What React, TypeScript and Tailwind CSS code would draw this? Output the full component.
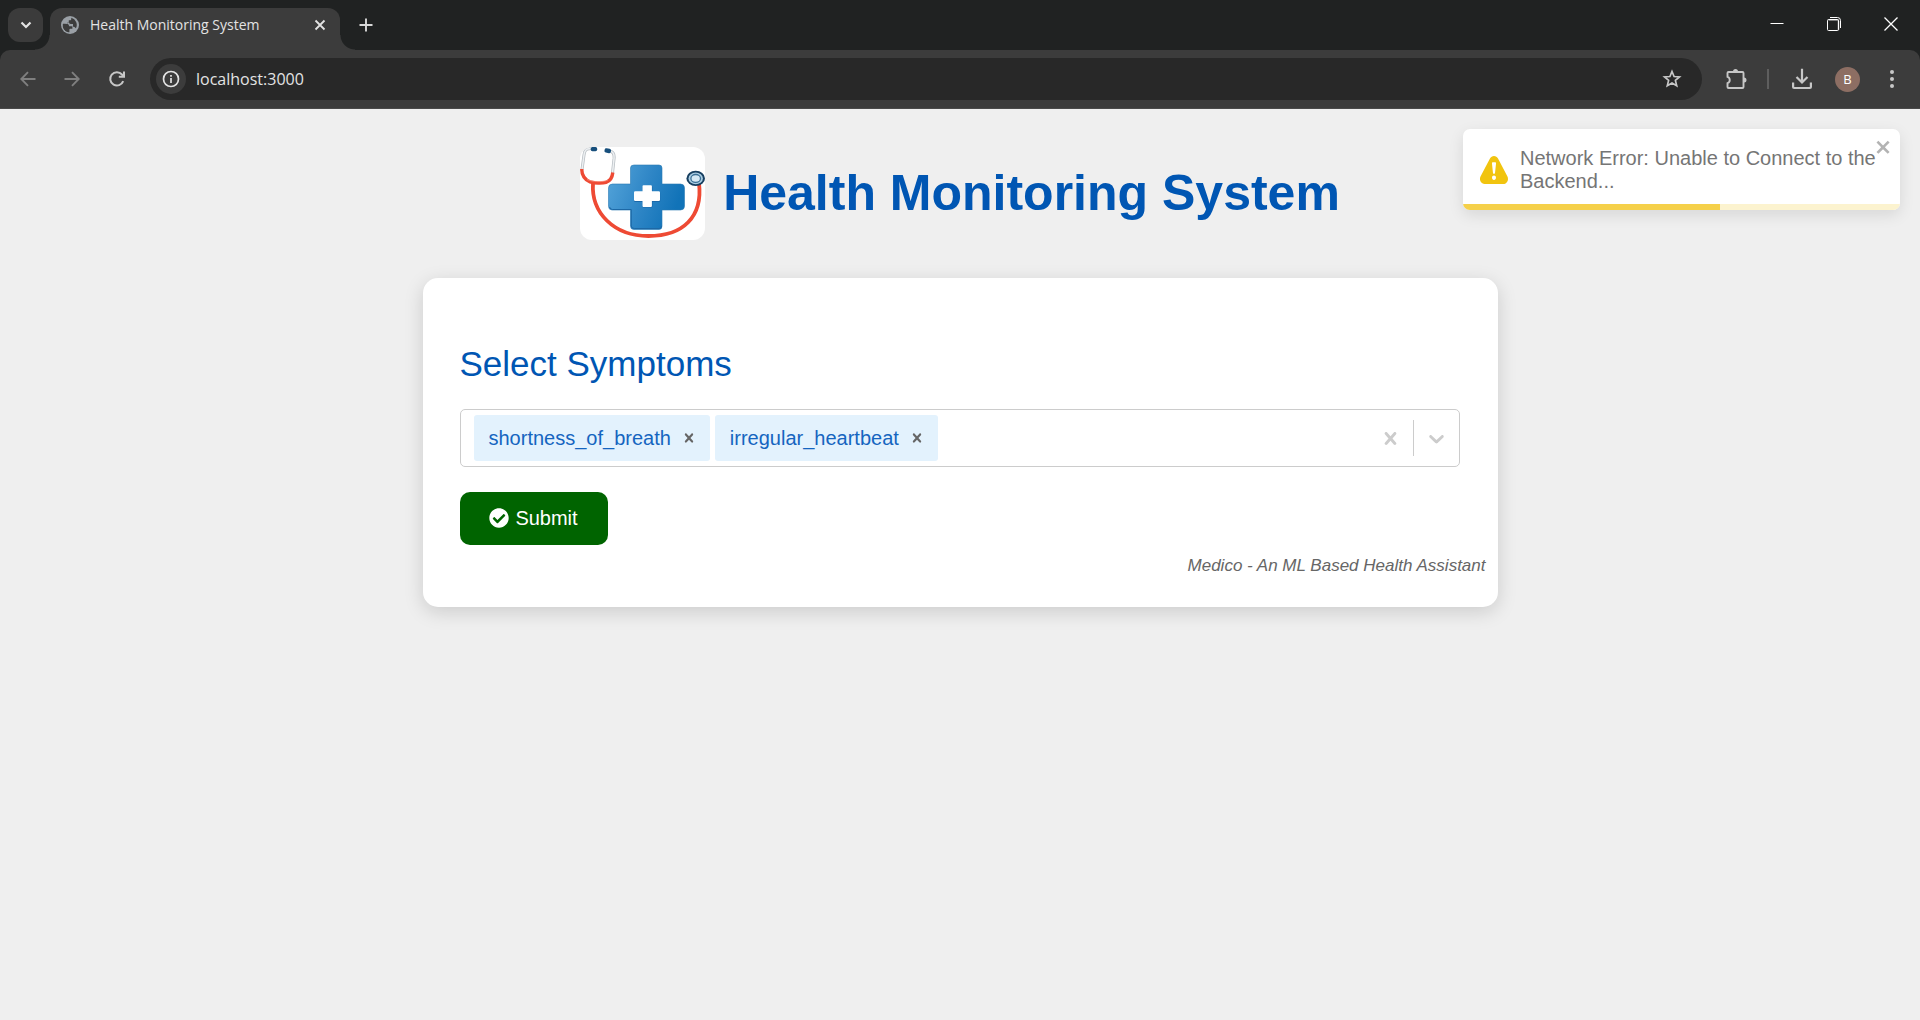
import { useState } from "react";
import { FaCheckCircle } from "react-icons/fa";

const CROSS =
  "M14.348 14.849c-0.469 0.469-1.229 0.469-1.697 0l-2.651-3.030-2.651 3.029c-0.469 0.469-1.229 0.469-1.697 0-0.469-0.469-0.469-1.229 0-1.697l2.758-3.15-2.759-3.152c-0.469-0.469-0.469-1.228 0-1.697s1.228-0.469 1.697 0l2.652 3.031 2.651-3.031c0.469-0.469 1.228-0.469 1.697 0s0.469 1.229 0 1.697l-2.758 3.152 2.758 3.15c0.469 0.469 0.469 1.229 0 1.698z";
const CHEVRON =
  "M4.516 7.548c0.436-0.446 1.043-0.481 1.576 0l3.908 3.747 3.908-3.747c0.533-0.481 1.141-0.446 1.574 0 0.436 0.445 0.408 1.197 0 1.615-0.406 0.418-4.695 4.502-4.695 4.502-0.217 0.223-0.502 0.335-0.787 0.335s-0.57-0.112-0.789-0.335c0 0-4.287-4.084-4.695-4.502s-0.436-1.17 0-1.615z";
const WARNING =
  "M23.32 17.191L15.438 2.184C14.728.833 13.416 0 11.996 0c-1.42 0-2.733.833-3.443 2.184L.533 17.448a4.744 4.744 0 000 4.368C1.243 23.167 2.555 24 3.975 24h16.05C22.22 24 24 22.044 24 19.632c0-.904-.251-1.746-.68-2.44zm-9.622 1.46c0 1.033-.724 1.823-1.698 1.823s-1.698-.79-1.698-1.822v-.043c0-1.028.724-1.822 1.698-1.822s1.698.79 1.698 1.822v.043zm.039-12.285l-.84 8.06c-.057.581-.408.943-.897.943-.49 0-.84-.367-.896-.942l-.84-8.065c-.057-.624.25-1.095.779-1.095h1.91c.528.005.84.476.784 1.1z";
const TOAST_CLOSE =
  "M7.71 8.23l3.75 3.75-1.48 1.48-3.75-3.75-3.75 3.75L1 11.98l3.75-3.75L1 4.48 2.48 3l3.75 3.75L9.98 3l1.48 1.48-3.75 3.75z";

function TabStrip() {
  return (
    <div className="flex h-[50px] items-start bg-[#202222] pl-2">
      <button aria-label="Search tabs" className="mt-2 flex h-[34px] w-[35px] items-center justify-center rounded-xl bg-[#3b3b3b] text-[#e3e3e3]">
        <svg width="12" height="8" viewBox="0 0 12 8" fill="none" stroke="currentColor" strokeWidth="2.200"><path d="M1.5 1.5 6 6l4.500-4.500" /></svg>
      </button>
      <div className="relative ml-[7px] mt-2 flex h-[42px] w-[290px] items-center rounded-t-xl bg-[#3c3c3c] pb-2 pl-[11px] pr-3 text-[#e3e3e3] before:absolute before:bottom-0 before:-left-[15px] before:size-[15px] before:bg-[radial-gradient(circle_at_0_0,transparent_14px,#3c3c3c_15px)] after:absolute after:bottom-0 after:-right-[15px] after:size-[15px] after:bg-[radial-gradient(circle_at_100%_0,transparent_14px,#3c3c3c_15px)]">
        <svg width="18" height="18" viewBox="0 0 18 18" className="shrink-0">
          <circle cx="9" cy="9" r="9" fill="#9aa0a6" />
          <path d="M10.300 1.800 10.200 3.500q0 .8-.8.800H7.800v1.300q0 .8-.9.900H6.200v1.700h4.500q1 0 1 1v1.500h1q1 0 1.300.9l.9.700A7.300 7.300 0 0 0 10.300 1.800Z" fill="#3c3c3c" />
          <path d="M1.800 8.100 5.900 12.200v.8q0 1.400 1.500 1.500v1.600A7.300 7.300 0 0 1 1.800 8.100Z" fill="#3c3c3c" />
          <path d="M6.300 6.400H8q.2 1.700 2 1.700h2v2.200h-1.700q-1.300 0-1.500-1.200Q8.500 8.200 7.500 8.200H6.300Z" fill="#9aa0a6" />
          <path d="M2 7.800q3.200-.2 4.700.3 1.300.7 1.500 2.200h2.300q.9 0 .9.900v1.500H9.300q-.9 0-.9.900v2.600l-1 .1A7.200 7.200 0 0 1 2 7.800Z" fill="#3c3c3c" />
        </svg>
        <span className="ml-[11px] flex-1 whitespace-nowrap text-[14px] leading-5">Health Monitoring System</span>
        <button aria-label="Close tab" className="flex size-4 items-center justify-center">
          <svg width="12" height="12" viewBox="0 0 12 12" stroke="currentColor" strokeWidth="1.800"><path d="m1.500 1.500 9 9m0-9-9 9" /></svg>
        </button>
      </div>
      <button aria-label="New tab" className="ml-[19px] mt-[18px] flex size-[14px] items-center justify-center text-[#d8d8d8]">
        <svg width="14" height="14" viewBox="0 0 14 14" stroke="currentColor" strokeWidth="1.900"><path d="M7 .5v13M.5 7h13" /></svg>
      </button>
      <div className="ml-auto flex h-12 items-center pr-px text-white">
        <button aria-label="Minimize" className="flex h-12 w-[57px] items-center justify-center">
          <svg width="14" height="14" viewBox="0 0 14 14" fill="currentColor"><rect x=".5" y="6" width="13" height="1" /></svg>
        </button>
        <button aria-label="Restore" className="flex h-12 w-[57px] items-center justify-center">
          <svg width="14" height="14" viewBox="0 0 14 14" fill="none" stroke="currentColor">
            <path d="M1.500 3h9q1 0 1 1v9" stroke="#9a9a9a" strokeWidth="1.600" />
            <rect x=".5" y="2.500" width="11" height="11" rx="1" />
            <path d="M3 .5h7.500a3 3 0 0 1 3 3V11" />
          </svg>
        </button>
        <button aria-label="Close window" className="flex h-12 w-[57px] items-center justify-center">
          <svg width="14" height="14" viewBox="0 0 14 14" stroke="currentColor" strokeWidth="1.300"><path d="m.5.500 13 13m0-13-13 13" /></svg>
        </button>
      </div>
    </div>
  );
}

function Toolbar() {
  return (
    <div className="bg-[#202222]">
      <div className="flex h-[59px] items-center rounded-t-[10px] border-b border-[#4a4a4a] bg-[#3c3c3c] pl-5 pr-[25px] text-[#c7c7c7]">
        <button aria-label="Back" className="text-[#7f7f7f]">
          <svg width="16" height="16" viewBox="0 0 16 16" fill="none" stroke="currentColor" strokeWidth="1.900"><path d="M15.500 8H1.500M8 1.200 1.300 8 8 14.800" /></svg>
        </button>
        <button aria-label="Forward" className="ml-7 text-[#7f7f7f]">
          <svg width="16" height="16" viewBox="0 0 16 16" fill="none" stroke="currentColor" strokeWidth="1.900"><path d="M.5 8h14M8 1.200 14.700 8 8 14.800" /></svg>
        </button>
        <button aria-label="Reload" className="ml-7">
          <svg width="18" height="18" viewBox="0 0 18 18" fill="none" stroke="currentColor" strokeWidth="2"><path d="M15.200 11.200A6.700 6.700 0 1 1 14 4.500l2 2M16 1.500v5.200h-5.200" /></svg>
        </button>
        <div className="ml-6 flex h-[42px] flex-1 items-center rounded-full bg-[#282828] pl-1.5 pr-5">
          <button aria-label="View site information" className="flex size-[30px] items-center justify-center rounded-full bg-[#3c3c3c] text-[#e3e3e3]">
            <svg width="18" height="18" viewBox="0 0 18 18" fill="none" stroke="currentColor" strokeWidth="1.700"><circle cx="9" cy="9" r="7.500" /><path d="M9 8v5M9 5v1.800" /></svg>
          </button>
          <input aria-label="Address" defaultValue="localhost:3000" className="ml-[10px] min-w-0 flex-1 bg-transparent text-[16px] leading-6 text-[#e3e3e3] outline-none" />
          <button aria-label="Bookmark this tab">
            <svg width="20" height="20" viewBox="0 0 20 20" fill="none" stroke="currentColor" strokeWidth="1.700"><path d="m10 2.500 2.100 5 5.400.4-4.100 3.500 1.300 5.300L10 13.900l-4.700 2.800 1.300-5.300L2.500 7.900l5.400-.4Z" /></svg>
          </button>
        </div>
        <button aria-label="Extensions" className="ml-[23px]">
          <svg width="22" height="22" viewBox="0 0 22 22" fill="none" stroke="currentColor" strokeWidth="1.900">
            <path d="M3.500 4H17.500q1 0 1 1V19q0 1-1 1H3.500q-1 0-1-1v-3.800c3-1 3-5.400 0-6.400V5q0-1 1-1Z" />
            <path d="M8 3.500a2.500 2.500 0 0 1 5 0ZM19 9.500a2.500 2.500 0 0 1 0 5Z" fill="currentColor" stroke="none" />
          </svg>
        </button>
        <span className="ml-5 h-5 w-0.5 bg-[#5e5e5e]" />
        <button aria-label="Downloads" className="ml-[23px]">
          <svg width="20" height="22" viewBox="0 0 20 22" fill="none" stroke="currentColor" strokeWidth="2.200"><path d="M10 .8V14M4.500 9 10 14.500 15.500 9M1.100 14.500V19q0 1 1 1h15.800q1 0 1-1v-4.500" /></svg>
        </button>
        <button aria-label="Profile" className="ml-[23px] flex size-[25px] items-center justify-center rounded-full bg-[#8d6e63] text-[13px] leading-none text-white">B</button>
        <button aria-label="Menu" className="ml-[29px]">
          <svg width="6" height="20" viewBox="0 0 6 20" fill="currentColor"><circle cx="3" cy="3" r="2" /><circle cx="3" cy="10" r="2" /><circle cx="3" cy="17" r="2" /></svg>
        </button>
      </div>
    </div>
  );
}

function Logo() {
  return (
    <svg width="125" height="93" viewBox="0 0 125 93" className="shrink-0 rounded-xl bg-white" role="img" aria-label="Stethoscope around a medical cross">
      <defs>
        <linearGradient id="crossFill" x1="0" y1="0" x2="1" y2="0.300">
          <stop offset="0" stopColor="#55a5da" />
          <stop offset="0.550" stopColor="#2f86c6" />
          <stop offset="1" stopColor="#1173b8" />
        </linearGradient>
      </defs>
      <path d="M13 36C11 66 34 89 68.500 89S123 70 119 36" fill="none" stroke="#ee4a34" strokeWidth="3.800" />
      <path d="M54 18h25q3 0 3 3v16h18.500q4 0 4 4v18q0 4-4 4H82v16q0 3.500-3 3.500H54q-3.500 0-3.500-3.500V63H32q-3.500 0-3.500-4V41q0-4 4-4h18V21q0-3 3.500-3Z" fill="url(#crossFill)" stroke="#2878b4" strokeWidth=".6" />
      <path d="M29.500 60q1 2.500 3 2.500h18.800V79q0 2.500 3 2.500H79q2.500 0 2.500-2.500" fill="none" stroke="#1d68a5" strokeWidth="1" />
      <path d="M63.500 39h8q1 0 1 1v5H79q1.300 0 1.300 1.300v7.400Q80.300 55 79 55h-6.500v4.500q0 1-1 1h-8q-1 0-1-1V55h-7.200Q54 55 54 53.700v-7.400Q54 45 55.300 45h7.200v-5q0-1 1-1Z" fill="#1b69aa" />
      <path d="M63.500 38.300h7.400q1 0 1 1v5h6.800q1.300 0 1.300 1.300v7.200q0 1.300-1.300 1.300h-6.800v5q0 1-1 1h-7.400q-1 0-1-1v-5h-7.200Q54 54.100 54 52.800v-7.200q0-1.300 1.300-1.300h7.200v-5q0-1 1-1Z" fill="#fff" />
      <path d="M11 1.800C6 1 4.600 3.500 4 8L2 22.500M30 4.200c3.500.5 4.400 3 4.100 7L32.500 26" fill="none" stroke="#b9bfc4" strokeWidth="3" />
      <path d="M11 1.800C6 1 4.600 3.500 4 8L2 22.500M30 4.200c3.500.5 4.400 3 4.100 7L32.500 26" fill="none" stroke="#edf0f2" strokeWidth="1.500" />
      <path d="M1.800 22C1.500 28 5 33 10 34.800c4.500 1.500 12 1.800 16 .6 4.300-1.500 6.300-5 6.800-9.900" fill="none" stroke="#ee4a34" strokeWidth="3.400" />
      <path d="M7 32.500c5 2.500 16 3 21 .5" fill="none" stroke="#f98775" strokeWidth=".8" />
      <rect x="10.700" y="0" width="6.500" height="4.200" rx="1.700" fill="#174f7c" />
      <rect x="24.500" y="1.500" width="6.500" height="4.400" rx="1.700" transform="rotate(10 27.700 3.700)" fill="#174f7c" />
      <ellipse cx="115.700" cy="31.400" rx="9.300" ry="7.700" fill="#173f60" />
      <ellipse cx="115.700" cy="31.400" rx="7.200" ry="5.900" fill="#a9cce2" />
      <ellipse cx="115.700" cy="31.400" rx="4.800" ry="3.900" fill="#d5e9f5" stroke="#3c7095" strokeWidth="1.300" />
    </svg>
  );
}

function Toast() {
  return (
    <div role="alert" className="absolute right-5 top-5 w-[437px] overflow-hidden rounded-[7px] bg-white shadow-[0_5px_15px_rgba(0,0,0,0.1)]">
      <div className="flex items-center pb-[17px] pl-[17px] pt-[18px]">
        <svg width="28" height="28" viewBox="0 0 24 24" className="mr-3 shrink-0" fill="#f1c40f"><path d={WARNING} /></svg>
        <p className="w-[360px] text-[20px] leading-[23px] text-[#757575]">Network Error: Unable to Connect to the Backend...</p>
      </div>
      <button aria-label="Close notification" className="absolute right-[7px] top-2 text-[#b3b3b3]">
        <svg width="18" height="20" viewBox="0 0 14 16" fill="currentColor"><path d={TOAST_CLOSE} /></svg>
      </button>
      <div className="absolute inset-x-0 bottom-0 h-1.5 bg-[#fcf3cf]">
        <div className="h-full w-[257px] bg-[#f5d04a]" />
      </div>
    </div>
  );
}

export default function App() {
  const [symptoms, setSymptoms] = useState(["shortness_of_breath", "irregular_heartbeat"]);
  return (
    <div className="flex min-h-screen flex-col bg-[#efefef]">
      <div className="font-['Open_Sans','Noto_Sans',sans-serif]">
        <TabStrip />
        <Toolbar />
      </div>
      <main className="relative flex flex-1 flex-col items-center font-['Liberation_Sans',Arial,sans-serif]">
        <Toast />
        <header className="mt-[38px] flex items-center justify-center gap-[18px]">
          <Logo />
          <h1 className="whitespace-nowrap pb-0.5 text-[50px] font-bold leading-[56px] text-[#0056b3]">Health Monitoring System</h1>
        </header>
        <section className="mt-[38px] w-full max-w-[1075px] rounded-[15px] bg-white pb-[31px] pt-[66px] shadow-[0_5px_19px_rgba(0,0,0,0.15)]">
          <form className="pl-[37px] pr-[38px]" onSubmit={(e) => e.preventDefault()}>
            <h2 className="text-[35px] leading-10 text-[#0056b3]">
              <label htmlFor="symptoms">Select Symptoms</label>
            </h2>
            <div className="mt-[25px] flex h-[58px] items-center rounded-[5px] border border-[#cccccc] bg-white pl-[13px]">
              <ul className="flex gap-[5px]">
                {symptoms.map((s) => (
                  <li key={s} className="flex h-[46px] items-center rounded-[3px] bg-[#e3f2fd] pl-[15px] text-[20px] leading-6 text-[#1565c0]">
                    {s}
                    <button type="button" aria-label={"Remove " + s} onClick={() => setSymptoms(symptoms.filter((x) => x !== s))} className="flex h-full items-center pl-[9px] pr-3 text-[#666666]">
                      <svg width="18" height="18" viewBox="0 0 20 20" fill="currentColor"><path d={CROSS} /></svg>
                    </button>
                  </li>
                ))}
              </ul>
              <input id="symptoms" className="h-8 min-w-0 flex-1 bg-transparent px-1 text-[20px] outline-none" />
              <button type="button" aria-label="Clear all" onClick={() => setSymptoms([])} className="mr-[10px] text-[#cccccc]">
                <svg width="25" height="25" viewBox="0 0 20 20" fill="currentColor"><path d={CROSS} /></svg>
              </button>
              <span className="h-9 w-px bg-[#cccccc]" />
              <button type="button" aria-label="Open symptom list" className="px-[10px] text-[#cccccc]">
                <svg width="25" height="25" viewBox="0 0 20 20" fill="currentColor"><path d={CHEVRON} /></svg>
              </button>
            </div>
            <button type="submit" className="mt-[25px] flex h-[53px] w-[148px] items-center justify-center gap-1.5 rounded-[10px] bg-[#006400] pb-0.5 text-[20px] leading-6 text-white">
              <FaCheckCircle size={20} />
              Submit
            </button>
          </form>
          <p className="mt-[11px] pr-3 text-right text-[17px] italic leading-5 text-[#666666]">Medico - An ML Based Health Assistant</p>
        </section>
      </main>
    </div>
  );
}
